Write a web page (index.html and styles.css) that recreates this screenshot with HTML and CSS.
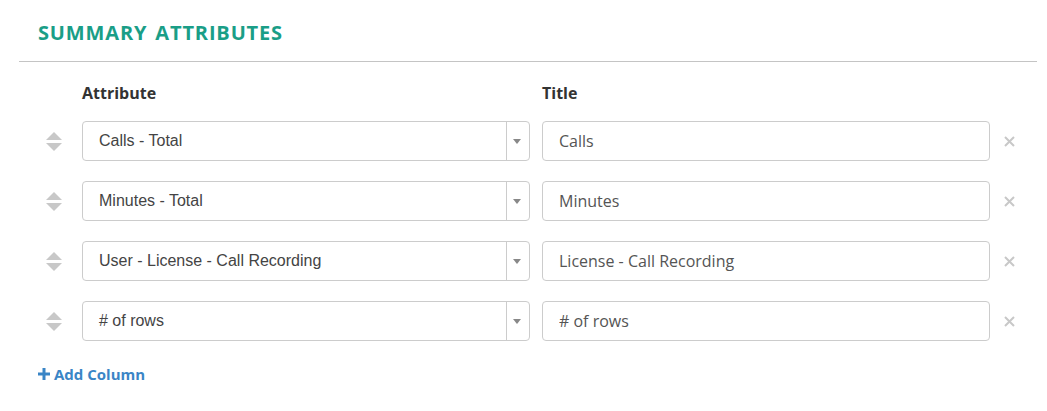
FILE: index.html
```html
<!DOCTYPE html>
<html>
<head>
    <title>Summary Attributes</title>
    <link rel="stylesheet" href="styles.css">
</head>
<body>
    <div class="panel">
        <h2 class="panel-title">SUMMARY ATTRIBUTES</h2>
        <hr class="divider">

        <div class="attr-table">
            <div class="attr-row attr-head">
                <span></span>
                <span class="head-label">Attribute</span>
                <span class="head-label">Title</span>
                <span></span>
            </div>

            <div class="attr-row">
                <span class="handle"><span class="up"></span><span class="down"></span></span>
                <div class="select-box"><span class="select-value">Calls - Total</span><span class="select-arrow"></span></div>
                <input class="title-input" type="text" value="Calls">
                <span class="remove"><svg width="11" height="11" viewBox="0 0 11 11"><path d="M1 1L10 10M10 1L1 10" stroke="#c8c8c8" stroke-width="2"/></svg></span>
            </div>

            <div class="attr-row">
                <span class="handle"><span class="up"></span><span class="down"></span></span>
                <div class="select-box"><span class="select-value">Minutes - Total</span><span class="select-arrow"></span></div>
                <input class="title-input" type="text" value="Minutes">
                <span class="remove"><svg width="11" height="11" viewBox="0 0 11 11"><path d="M1 1L10 10M10 1L1 10" stroke="#c8c8c8" stroke-width="2"/></svg></span>
            </div>

            <div class="attr-row">
                <span class="handle"><span class="up"></span><span class="down"></span></span>
                <div class="select-box"><span class="select-value">User - License - Call Recording</span><span class="select-arrow"></span></div>
                <input class="title-input" type="text" value="License - Call Recording">
                <span class="remove"><svg width="11" height="11" viewBox="0 0 11 11"><path d="M1 1L10 10M10 1L1 10" stroke="#c8c8c8" stroke-width="2"/></svg></span>
            </div>

            <div class="attr-row">
                <span class="handle"><span class="up"></span><span class="down"></span></span>
                <div class="select-box"><span class="select-value"># of rows</span><span class="select-arrow"></span></div>
                <input class="title-input" type="text" value="# of rows">
                <span class="remove"><svg width="11" height="11" viewBox="0 0 11 11"><path d="M1 1L10 10M10 1L1 10" stroke="#c8c8c8" stroke-width="2"/></svg></span>
            </div>

            <a class="add-link" href="#">
                <svg width="12" height="12" viewBox="0 0 12 12"><path d="M4.5 0h3v4.5H12v3H7.5V12h-3V7.5H0v-3h4.5z" fill="#3a85c6"/></svg>
                Add Column
            </a>
        </div>
    </div>
</body>
</html>
```

FILE: styles.css
```css
body {
    margin: 0;
    background: #fff;
    font-family: "Open Sans", Arial, sans-serif;
    color: #333;
}

.panel {
    padding: 0 10px 0 19px;
}

.panel-title {
    margin: 0;
    padding: 20px 0 0 19px;
    height: 24px;
    line-height: 26px;
    font-size: 20px;
    font-weight: 700;
    letter-spacing: 0.85px;
    word-spacing: 2px;
    color: #1a9e87;
}

.divider {
    margin: 17px 0 0 0;
    border: none;
    border-top: 1px solid #c4c4c4;
    height: 0;
}

.attr-table {
    padding: 20px 0 0 19px;
}

.attr-row {
    display: grid;
    grid-template-columns: 44px 460px 460px 1fr;
    align-items: center;
    height: 40px;
    margin-bottom: 20px;
}

.attr-row.attr-head {
    height: 35px;
    margin-bottom: 4px;
    align-items: start;
}

.head-label {
    font-size: 16px;
    font-weight: 700;
    color: #333;
}

.handle {
    display: flex;
    flex-direction: column;
    align-items: flex-start;
    gap: 3px;
    padding-left: 8px;
}

.handle .up {
    width: 0;
    height: 0;
    border-left: 8px solid transparent;
    border-right: 8px solid transparent;
    border-bottom: 8px solid #c8c8c8;
}

.handle .down {
    width: 0;
    height: 0;
    border-left: 8px solid transparent;
    border-right: 8px solid transparent;
    border-top: 8px solid #c8c8c8;
}

.select-box {
    display: flex;
    align-items: center;
    box-sizing: border-box;
    width: 448px;
    height: 40px;
    border: 1px solid #ccc;
    border-radius: 4px;
    background: #fff;
}

.select-value {
    flex: 1;
    padding-left: 16px;
    padding-bottom: 1px;
    font-family: "Liberation Sans", Arial, sans-serif;
    font-size: 16px;
    color: #444;
}

.select-arrow {
    position: relative;
    width: 22px;
    height: 38px;
    border-left: 1px solid #ccc;
}

.select-arrow::after {
    content: "";
    position: absolute;
    left: 6px;
    top: 17px;
    border-left: 4px solid transparent;
    border-right: 4px solid transparent;
    border-top: 5px solid #888;
}

.title-input {
    box-sizing: border-box;
    width: 448px;
    height: 40px;
    padding: 0 16px 1px;
    border: 1px solid #ccc;
    border-radius: 4px;
    font-family: "Open Sans", sans-serif;
    font-size: 16px;
    color: #555;
    outline: none;
}

.remove {
    display: flex;
    padding-left: 2px;
}

.add-link {
    display: flex;
    align-items: center;
    gap: 4px;
    width: max-content;
    margin-top: 23px;
    line-height: 20px;
    font-size: 15px;
    font-weight: 700;
    color: #3a85c6;
    text-decoration: none;
}
```
